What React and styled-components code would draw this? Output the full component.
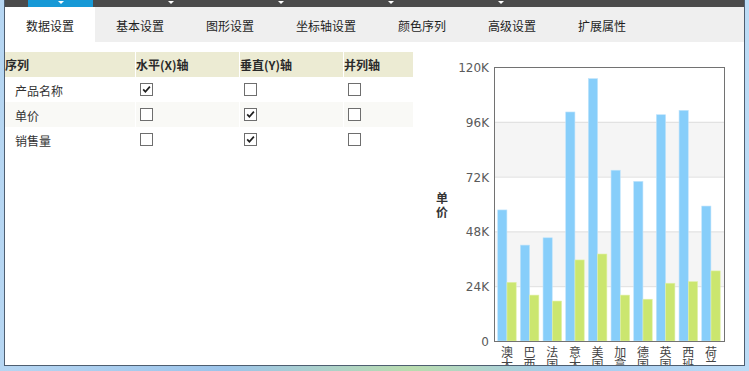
import React from "react";
import styled, { createGlobalStyle } from "styled-components";

const GlobalStyle = createGlobalStyle`
  html, body {
    margin: 0;
    padding: 0;
    overflow: hidden;
    background: linear-gradient(90deg, #b6d6f2 0%, #9cc4ea 30%, #b9dcae 55%, #a4cbee 75%, #bcdcf6 100%);
    font-family: "Noto Sans CJK SC", "Noto Sans", sans-serif;
  }
`;

const Frame = styled.div`
  margin-left: 4px;
  width: 739px;
  height: 365px;
  border: 1px solid #4e5e70;
  border-top: none;
  background: #fff;
  display: flex;
  flex-direction: column;
  overflow: hidden;
`;

const TopBar = styled.div`
  height: 7px;
  background: #4b4b4b;
  display: flex;
  padding-left: 23px;
  gap: 45px;
`;

const Drop = styled.div`
  width: 65px;
  height: 7px;
  background: ${(p) => (p.active ? "#1799d6" : "transparent")};
  display: flex;
  justify-content: center;
  &::after {
    content: "";
    margin-top: 1px;
    border-left: 3px solid transparent;
    border-right: 3px solid transparent;
    border-top: 3px solid #fff;
    height: 0;
  }
`;

const TabRow = styled.div`
  height: 35px;
  background: #efefef;
  display: flex;
`;

const Tab = styled.div`
  padding: 3px 21px 0;
  min-width: 48px;
  display: flex;
  align-items: center;
  justify-content: center;
  font-size: 12px;
  line-height: 12px;
  color: #1e1e1e;
  background: ${(p) => (p.active ? "#fff" : "transparent")};
`;

const Body = styled.div`
  flex: 1;
  display: flex;
`;

const TablePanel = styled.div`
  width: 408px;
  padding-top: 10px;
`;

const Grid = styled.div`
  display: grid;
  grid-template-columns: 130px 103px 103px 69px;
  column-gap: 1px;
`;

const HeadCell = styled.div`
  height: 25px;
  background: #ecebd3;
  display: flex;
  align-items: center;
  font-size: 12px;
  font-weight: bold;
  color: #2a2a2a;
`;

const Cell = styled.div`
  height: 25px;
  display: flex;
  align-items: center;
  padding-left: ${(p) => (p.text ? "10px" : "4px")};
  padding-top: ${(p) => (p.text ? "2px" : "0")};
  box-sizing: border-box;
  background: ${(p) => (p.alt ? "#f9f9f6" : "#fff")};
  font-size: 12px;
  color: #333;
`;

const Box = styled.span`
  width: 11px;
  height: 11px;
  border: 1px solid #6e6e6e;
  background: #fff;
  display: inline-flex;
  align-items: center;
  justify-content: center;
`;

const ChartPanel = styled.div`
  width: 331px;
  height: 323px;
  overflow: hidden;
`;

const Check = ({ on }) => (
  <Box>
    {on && (
      <svg width="11" height="11" viewBox="0 0 11 11">
        <path d="M2.2 5.4 L4.4 7.8 L8.9 2.6" fill="none" stroke="#1f1f1f" strokeWidth="1.7" />
      </svg>
    )}
  </Box>
);

const tabs = ["数据设置", "基本设置", "图形设置", "坐标轴设置", "颜色序列", "高级设置", "扩展属性"];

const rows = [
  { name: "产品名称", axis: [true, false, false] },
  { name: "单价", axis: [false, true, false] },
  { name: "销售量", axis: [false, true, false] },
];

const data = [
  ["澳大利亚", 57.4, 25.7],
  ["巴西", 42, 20.1],
  ["法国", 45.2, 17.5],
  ["意大利", 100.3, 35.5],
  ["美国", 114.9, 38.1],
  ["加拿大", 74.8, 20.1],
  ["德国", 69.9, 18.3],
  ["英国", 99.1, 25.3],
  ["西班牙", 101, 26],
  ["荷兰", 59.1, 30.7],
];

const PL = 81;
const PR = 311;
const PT = 25;
const PB = 299;
const yOf = (v) => PB - (v / 120) * (PB - PT);

const Chart = () => {
  const ticks = [0, 24, 48, 72, 96, 120];
  return (
    <svg width="331" height="323" style={{ display: "block" }}>
      <rect x={PL} y={yOf(96)} width={PR - PL} height={yOf(72) - yOf(96)} fill="#f5f5f5" />
      <rect x={PL} y={yOf(48)} width={PR - PL} height={yOf(24) - yOf(48)} fill="#f5f5f5" />
      {ticks.slice(1, 5).map((t) => (
        <line key={t} x1={PL} x2={PR} y1={yOf(t) + 0.5} y2={yOf(t) + 0.5} stroke="#dedede" />
      ))}
      {ticks.map((t) => (
        <text
          key={t}
          x="76"
          y={yOf(t) + 5}
          textAnchor="end"
          fontFamily="DejaVu Sans, sans-serif"
          fontSize="12"
          fill="#5a5a5a"
        >
          {t === 0 ? "0" : `${t}K`}
        </text>
      ))}
      <text
        x="29"
        y="150"
        fontSize="12"
        fontWeight="bold"
        fill="#333"
        fontFamily="Noto Sans CJK SC, sans-serif"
        style={{ writingMode: "vertical-rl", letterSpacing: "2px" }}
      >
        单价
      </text>
      {data.map(([name, a, b], i) => {
        const x = 84.7 + i * 22.67;
        return (
          <g key={name}>
            <rect x={x} y={yOf(a)} width="9.2" height={PB - yOf(a)} fill="#87cefa" stroke="#bfe3fb" strokeWidth="0.6" />
            <rect x={x + 9.3} y={yOf(b)} width="9.2" height={PB - yOf(b)} fill="#cbe66f" stroke="#e0f0a8" strokeWidth="0.6" />
            <text
              x={x + 9.2}
              y="304.5"
              fontSize="12"
              fill="#444"
              fontFamily="Noto Sans CJK SC, sans-serif"
              style={{ writingMode: "vertical-rl" }}
            >
              {name}
            </text>
          </g>
        );
      })}
      <rect x={PL + 0.5} y={PT + 0.5} width={PR - PL} height={PB - PT} fill="none" stroke="#727272" />
    </svg>
  );
};

export default function App() {
  return (
    <>
      <GlobalStyle />
      <Frame>
        <TopBar>
          {[0, 1, 2, 3, 4].map((i) => (
            <Drop key={i} active={i === 0} />
          ))}
        </TopBar>
        <TabRow>
          {tabs.map((t, i) => (
            <Tab key={t} active={i === 0}>
              {t}
            </Tab>
          ))}
        </TabRow>
        <Body>
          <TablePanel>
            <Grid>
              <HeadCell>序列</HeadCell>
              <HeadCell>水平(X)轴</HeadCell>
              <HeadCell>垂直(Y)轴</HeadCell>
              <HeadCell>并列轴</HeadCell>
              {rows.map((r, ri) => (
                <React.Fragment key={r.name}>
                  <Cell text alt={ri === 1}>{r.name}</Cell>
                  {r.axis.map((on, ci) => (
                    <Cell key={ci} alt={ri === 1}>
                      <Check on={on} />
                    </Cell>
                  ))}
                </React.Fragment>
              ))}
            </Grid>
          </TablePanel>
          <ChartPanel>
            <Chart />
          </ChartPanel>
        </Body>
      </Frame>
    </>
  );
}
